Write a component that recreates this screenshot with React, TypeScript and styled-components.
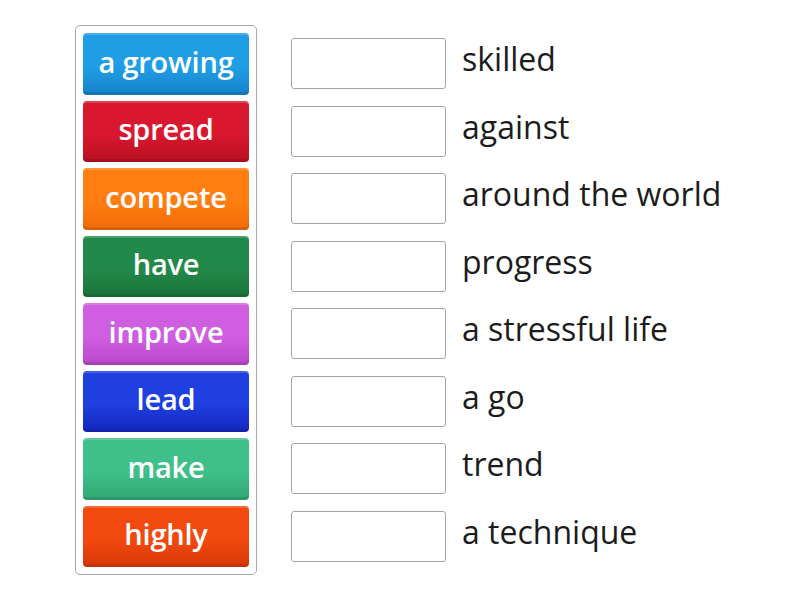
import React from 'react';
import styled, { createGlobalStyle } from 'styled-components';

const GlobalStyle = createGlobalStyle`
  html, body {
    margin: 0;
    padding: 0;
    background: #fff;
  }
  body {
    font-family: "Open Sans", Lato, sans-serif;
  }
`;

interface Tile {
  word: string;
  color: string;
  dark: string;
}

const tiles: Tile[] = [
  { word: 'a growing', color: '#1f9ee6', dark: '#1781c9' },
  { word: 'spread', color: '#d9182f', dark: '#b80f22' },
  { word: 'compete', color: '#ff7e12', dark: '#f06a05' },
  { word: 'have', color: '#23894a', dark: '#1b7238' },
  { word: 'improve', color: '#d05ee0', dark: '#b947c9' },
  { word: 'lead', color: '#1f3fe0', dark: '#1426bd' },
  { word: 'make', color: '#3fbf89', dark: '#31a874' },
  { word: 'highly', color: '#f2490f', dark: '#d83806' },
];

const endings = [
  'skilled',
  'against',
  'around the world',
  'progress',
  'a stressful life',
  'a go',
  'trend',
  'a technique',
];

const Page = styled.div`
  display: flex;
  align-items: flex-start;
  gap: 34px;
  padding: 25px 0 0 75px;
`;

const Bank = styled.div`
  display: flex;
  flex-direction: column;
  gap: 6px;
  width: 166px;
  padding: 7px;
  border: 1px solid #a8a8a8;
  border-radius: 5px;
`;

const WordTile = styled.div<{ $color: string; $dark: string }>`
  height: 61.5px;
  box-sizing: border-box;
  display: flex;
  align-items: center;
  justify-content: center;
  border-radius: 4px;
  background: linear-gradient(to bottom, ${(p) => p.$color} 0%, ${(p) => p.$color} 55%, ${(p) => p.$dark} 100%);
  box-shadow: inset 0 2px 0 rgba(255, 255, 255, 0.18), inset 0 -3px 0 rgba(0, 0, 0, 0.1);
  color: #fff;
  font-size: 29px;
  font-weight: 600;
  letter-spacing: -0.2px;
  padding-bottom: 5px;
`;

const Answers = styled.div`
  display: flex;
  flex-direction: column;
  gap: 6px;
  padding-top: 8px;
`;

const Row = styled.div`
  height: 61.5px;
  display: flex;
  align-items: center;
  gap: 16px;
`;

const Slot = styled.div`
  width: 155px;
  height: 51px;
  box-sizing: border-box;
  border: 1px solid #a4a4a4;
  border-radius: 3px;
  background: #fff;
`;

const Ending = styled.span`
  font-size: 32px;
  color: #1c1c1c;
  padding-bottom: 10px;
`;

export default function App(): JSX.Element {
  return (
    <>
      <GlobalStyle />
      <Page>
        <Bank>
          {tiles.map((t) => (
            <WordTile key={t.word} $color={t.color} $dark={t.dark}>
              {t.word}
            </WordTile>
          ))}
        </Bank>
        <Answers>
          {endings.map((e) => (
            <Row key={e}>
              <Slot />
              <Ending>{e}</Ending>
            </Row>
          ))}
        </Answers>
      </Page>
    </>
  );
}
